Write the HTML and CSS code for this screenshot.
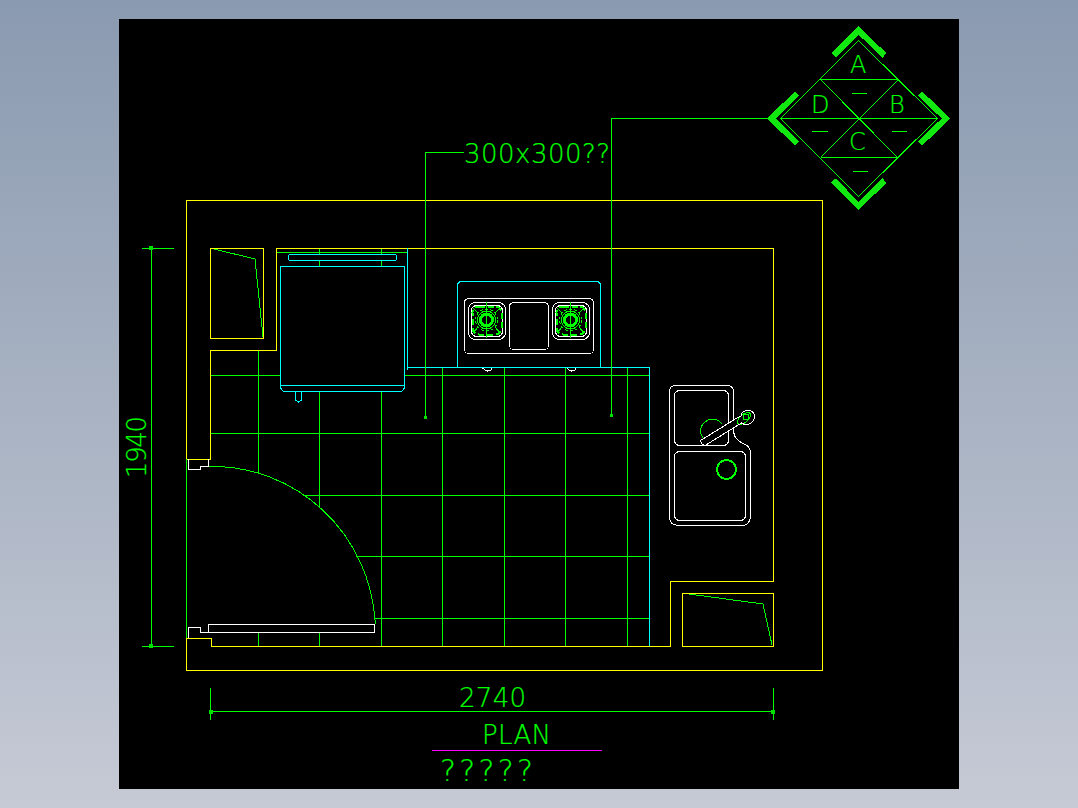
FILE: index.html
```html
<!DOCTYPE html>
<html>
  <head>
    <meta charset="UTF-8" />
    <title>Kitchen plan</title>
    <link rel="stylesheet" href="styles.css">
  </head>
  <body>
    <div class="canvas">
      <svg class="drawing" width="840" height="770" viewBox="119 19 840 770">
        <defs>
          <g id="burner">
            <rect class="white" x="468.5" y="302.5" width="37" height="37" rx="7" />
            <rect class="white" x="471.5" y="305.5" width="31" height="31" rx="5" />
            <rect class="green dashed" x="472.5" y="306.5" width="29" height="28" rx="6" />
            <path class="green" d="M486.5 302V338M473 333L478 327M500 333L495 327M473 308L478 313M500 308L495 313" />
            <circle class="green dotted" cx="486.5" cy="320" r="11" />
            <circle class="green" cx="486.5" cy="320" r="9" />
            <circle class="green thick" cx="486.5" cy="320" r="6" />
          </g>
        </defs>

        <!-- floor tiles -->
        <path class="green" d="M277 252.5H407M319.5 249V254M319.5 261V266M381.5 249V254M381.5 261V266M258.5 350V473M319.5 391V508M381.5 391V646M442.5 367V646M504.5 367V646M565.5 367V646M627.5 367V646M258.5 632V646M319.5 632V646" />
        <path class="green" d="M211 375.5H280M405 375.5H649M211 433.5H649M303 495.5H649M356 556.5H649M375 618.5H649" />

        <!-- walls -->
        <rect class="yellow" x="186.5" y="200.5" width="636" height="470" />
        <path class="yellow" d="M186.5 459.5H210.5V350.5H276.5V248.5H773.5V581.5H670.5V646.5H211.5V638.5H186.5" />
        <path class="green" d="M186.5 459V638" />

        <!-- closets -->
        <rect class="yellow" x="210.5" y="248.5" width="53" height="90" />
        <path class="green" d="M214 249L255 259L263 337" />
        <rect class="yellow" x="682.5" y="593.5" width="91" height="53" />
        <path class="green" d="M689 594L763 604L772 645" />

        <!-- fridge -->
        <rect class="cyan" x="288.5" y="254.5" width="108" height="6" rx="2" />
        <path class="cyan" d="M280.5 385.5V266.5H404.5V385.5ZM280.5 385.5V388L283.5 391.5H401.5L404.5 388V385.5" />
        <path class="cyan" d="M295.5 391.5V400L298.5 402L301.5 400V391.5" />

        <!-- counter edge -->
        <path class="cyan" d="M407.5 248V370M407.5 367.5H649.5V646" />

        <!-- stove -->
        <path class="cyan" d="M457.5 367V284L460 281.5H598L600.5 284V367" />
        <rect class="white" x="464.5" y="298.5" width="129" height="55" rx="4" />
        <rect class="white" x="509.5" y="302.5" width="39" height="47" rx="4" />
        <use href="#burner" />
        <use href="#burner" x="84" />
        <path class="white" d="M482.5 368L485 370H487V372M487 370H491L492 368M567 368L569 370H571V372M571 370H575L576 368" />

        <!-- sink -->
        <path class="white" d="M669.5 392Q669.5 385.5 676 385.5H727Q733.5 385.5 733.5 392V429Q733.5 437 738 440Q741 443 745 444.5Q750.5 447 750.5 453V516Q750.5 525.5 741 525.5H679Q669.5 525.5 669.5 516Z" />
        <rect class="white" x="674.5" y="390.5" width="54" height="55" rx="5" />
        <rect class="white" x="674.5" y="451.5" width="71" height="69" rx="5" />
        <path class="erase" d="M702 443L740 420" />
        <path class="green" d="M703 438A9.5 9.5 0 1 1 722 424" />
        <circle class="green" cx="726.5" cy="469.5" r="10" />
        <circle class="green" cx="726.5" cy="469.5" r="9" />
        <ellipse class="green" cx="744" cy="418.5" rx="8" ry="4" transform="rotate(-40 744 418.5)" />
        <circle class="green" cx="746" cy="417" r="3" />
        <path class="white" d="M737 418L700.5 440.5L702 444L705 445.5L741.5 423Q746 426 751 423Q756 419 754 414Q751 409 745 411Q741 413 741 416Z" />

        <!-- door -->
        <path class="green" d="M209 466.5H212A163 165 0 0 1 375 620V624" />
        <rect class="white" x="208.5" y="624.5" width="166" height="8" />
        <path class="white" d="M188.5 459V469.5H200.5V466.5H208.5V459M188.5 638V627.5H200.5V632.5H208.5" />

        <!-- leaders -->
        <path class="green" d="M768 118.5H611.5V415M464 152.5H425.5V417" />
        <rect class="dot" x="424" y="416" width="3" height="3" />
        <rect class="dot" x="610" y="414" width="3" height="3" />
        <text class="cad-text" x="464" y="163" textLength="146">300x300??</text>

        <!-- dimensions -->
        <path class="green" d="M151.5 246V648M142 248.5H174M142 646.5H174" />
        <rect class="dot" x="149" y="246" width="4" height="4" />
        <rect class="dot" x="149" y="644" width="4" height="4" />
        <text class="cad-text" transform="translate(146 478) rotate(-90)" textLength="62">1940</text>
        <path class="green" d="M210.5 688V720M773.5 688V720M210.5 711.5H773.5" />
        <rect class="dot" x="209" y="710" width="4" height="4" />
        <rect class="dot" x="771" y="710" width="4" height="4" />
        <text class="cad-text" x="459" y="707" textLength="67">2740</text>

        <!-- title -->
        <text class="cad-text" x="482" y="744" textLength="69">PLAN</text>
        <path class="magenta" d="M432 750.5H602" />
        <text class="cad-text title-sub" x="440" y="781" textLength="93">?????</text>

        <!-- compass key -->
        <path class="chevron" d="M833.5 55.5L858.5 30.5L884.5 55.5M833.5 180.5L858.5 206L884.5 180.5M797 93.5L771.5 118.5L797 143.5M920 93.5L946 118.5L920 143.5" />
        <path class="green" d="M858.5 40.5L937.5 118.5L858.5 196.5L780.5 118.5ZM780.5 118.5H937.5M820.5 79.5H898.5M820.5 157.5H897.5M820.5 79.5L897.5 157.5M898.5 79.5L820.5 157.5" />
        <path class="green" d="M852 93.5H867M812 131.5H828M892 131.5H907M853 171.5H868" />
        <text class="cad-text key" x="850" y="73" textLength="17">A</text>
        <text class="cad-text key" x="811" y="113" textLength="15">D</text>
        <text class="cad-text key" x="889" y="113" textLength="16">B</text>
        <text class="cad-text key" x="849" y="150" textLength="16">C</text>
      </svg>
    </div>
  </body>
</html>
```

FILE: styles.css
```css
* {
  margin: 0;
  padding: 0;
  box-sizing: border-box;
}

html,
body {
  height: 100%;
}

body {
  display: flex;
  align-items: center;
  justify-content: center;
  background: linear-gradient(180deg, #8a9ab0 0%, #c6cad5 100%);
  overflow: hidden;
}

.canvas {
  width: 840px;
  height: 770px;
  background: #000;
}

.drawing {
  display: block;
  shape-rendering: crispEdges;
}

.drawing path,
.drawing rect,
.drawing circle,
.drawing ellipse {
  fill: none;
  stroke-width: 1;
}

.drawing .green {
  stroke: #00ff00;
}

.drawing .yellow {
  stroke: #ffff00;
}

.drawing .cyan {
  stroke: #00ffff;
}

.drawing .white {
  stroke: #ffffff;
}

.drawing .magenta {
  stroke: #ff00ff;
}

.drawing .erase {
  stroke: #000;
  stroke-width: 6;
}

.drawing .dashed {
  stroke-width: 2;
  stroke-dasharray: 6 3;
}

.drawing .dotted {
  stroke-width: 1;
  stroke-dasharray: 3 2;
}

.drawing .thick {
  stroke-width: 3;
}

.drawing .dot {
  fill: #00e000;
  stroke: none;
}

.drawing .chevron {
  stroke: #10e810;
  stroke-width: 6;
  stroke-linejoin: miter;
}

.cad-text {
  font-family: "DejaVu Sans", sans-serif;
  font-weight: 200;
  font-size: 26px;
  fill: #00ff00;
  stroke: #00ff00;
  stroke-width: 0.2;
}

.title-sub {
  font-size: 30px;
}

.key {
  font-size: 24px;
}
```
